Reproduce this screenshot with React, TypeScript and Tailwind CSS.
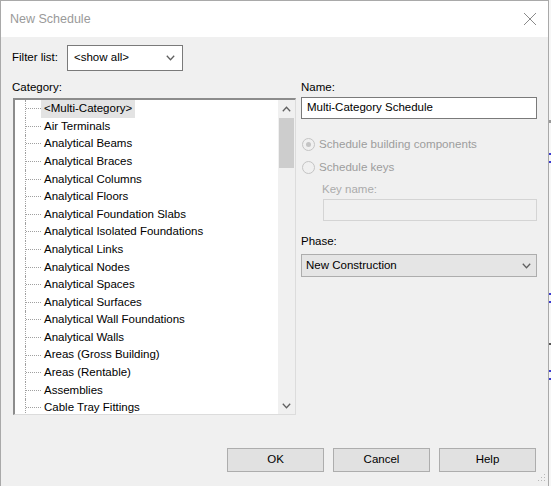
import React from "react";

const items = [
  "<Multi-Category>",
  "Air Terminals",
  "Analytical Beams",
  "Analytical Braces",
  "Analytical Columns",
  "Analytical Floors",
  "Analytical Foundation Slabs",
  "Analytical Isolated Foundations",
  "Analytical Links",
  "Analytical Nodes",
  "Analytical Spaces",
  "Analytical Surfaces",
  "Analytical Wall Foundations",
  "Analytical Walls",
  "Areas (Gross Building)",
  "Areas (Rentable)",
  "Assemblies",
  "Cable Tray Fittings",
];

function Chevron({ up = false, color = "#606060" }: { up?: boolean; color?: string }) {
  return (
    <svg width="9" height="6" viewBox="0 0 9 6">
      <path
        d={up ? "M0.8 5.2 L4.5 1.3 L8.2 5.2" : "M0.8 0.8 L4.5 4.7 L8.2 0.8"}
        fill="none"
        stroke={color}
        strokeWidth="1.3"
      />
    </svg>
  );
}

export default function App() {
  return (
    <div
      className="w-[551px] h-[486px] flex bg-white overflow-hidden text-[11.5px] text-black"
      style={{ fontFamily: '"Liberation Sans", Arial, sans-serif' }}
    >
      <div className="w-[549px] h-[486px] flex flex-col border-l border-t border-r border-[#a9a9a9] bg-[#f0f0f0]">
        {/* title bar */}
        <div className="h-[36px] flex-none bg-white flex items-center justify-between pl-[9px] pr-[10px]">
          <span className="text-[12.5px] text-[#9a9a9a]">New Schedule</span>
          <svg width="14" height="14" viewBox="0 0 14 14" className="mr-[1px]">
            <path d="M1 1 L13 13 M13 1 L1 13" stroke="#8a8a8a" strokeWidth="1" fill="none" />
          </svg>
        </div>

        {/* body */}
        <div className="flex-1 flex flex-col pl-[11px] pt-[8px] relative">
          {/* filter row */}
          <div className="flex items-center h-[26px]">
            <span>Filter list:</span>
            <div className="ml-[9px] w-[116px] h-[26px] bg-white border border-[#7a7a7a] flex items-center justify-between pl-[6px] pr-[7px]">
              <span>&lt;show all&gt;</span>
              <Chevron />
            </div>
          </div>

          {/* main */}
          <div className="flex mt-[8px] gap-[5px]">
            {/* left column */}
            <div className="w-[284px] flex flex-col">
              <div className="h-[16px] leading-[16px]">Category:</div>
              <div className="ml-[1px] mt-[3px] w-[283px] h-[317px] bg-white border-t-2 border-l-2 border-r border-b border-t-[#8c8c8c] border-l-[#8c8c8c] border-r-[#dcdcdc] border-b-[#dcdcdc] flex">
                <div className="flex-1 flex flex-col overflow-hidden">
                  {items.map((it, i) => (
                    <div key={it} className="h-[17.6px] flex-none flex items-stretch">
                      <span className="w-[10px] flex-none" />
                      <span className="w-[16px] flex-none border-l border-dotted border-[#a0a0a0] flex items-center">
                        <span className="w-full border-t border-dotted border-[#a0a0a0]" />
                      </span>
                      <span
                        className={
                          "flex items-center px-[3px] whitespace-nowrap " +
                          (i === 0 ? "bg-[#e3e3e3]" : "")
                        }
                      >
                        {it}
                      </span>
                    </div>
                  ))}
                </div>
                <div className="w-[17px] flex-none bg-[#f0f0f0] flex flex-col">
                  <div className="h-[17px] flex items-center justify-center">
                    <Chevron up />
                  </div>
                  <div className="mt-[1px] mx-[1px] h-[50px] bg-[#cdcdcd]" />
                  <div className="flex-1" />
                  <div className="h-[17px] flex items-center justify-center">
                    <Chevron />
                  </div>
                </div>
              </div>
            </div>

            {/* right column */}
            <div className="w-[236px] flex flex-col">
              <div className="h-[16px] leading-[16px]">Name:</div>
              <div className="mt-[2px] h-[22px] bg-white border border-[#7a7a7a] flex items-center pl-[5px]">
                Multi-Category Schedule
              </div>

              <div className="mt-[16px] h-[18px] flex items-center text-[#9d9d9d] text-[11.6px]">
                <span className="ml-[1px] w-[13px] h-[13px] rounded-full border border-[#c4c4c4] bg-[#f0f0f0] flex items-center justify-center">
                  <span className="w-[5px] h-[5px] rounded-full bg-[#c4c4c4]" />
                </span>
                <span className="ml-[4px]">Schedule building components</span>
              </div>
              <div className="mt-[5px] h-[18px] flex items-center text-[#9d9d9d] text-[11.6px]">
                <span className="ml-[1px] w-[13px] h-[13px] rounded-full border border-[#c4c4c4] bg-[#f0f0f0]" />
                <span className="ml-[4px]">Schedule keys</span>
              </div>
              <div className="mt-[5px] h-[16px] leading-[16px] pl-[21px] text-[#ababab]">Key name:</div>
              <div className="mt-[2px] ml-[22px] h-[22px] border border-[#d4d4d4] bg-[#f0f0f0]" />

              <div className="mt-[12px] h-[16px] leading-[16px]">Phase:</div>
              <div className="mt-[5px] h-[23px] bg-[#e5e5e5] border border-[#adadad] flex items-center justify-between pl-[4px] pr-[5px]">
                <span>New Construction</span>
                <Chevron />
              </div>
            </div>
          </div>

          {/* buttons */}
          <div className="flex mt-[33px] pl-[215px] gap-[9px]">
            {["OK", "Cancel", "Help"].map((b) => (
              <div
                key={b}
                className="w-[97px] h-[24px] bg-[#e1e1e1] border border-[#adadad] flex items-center justify-center"
              >
                {b}
              </div>
            ))}
          </div>

          {/* resize grip */}
          <svg width="8" height="8" viewBox="0 0 8 8" className="absolute right-[2px] bottom-[4px]">
            <rect x="6" y="0" width="1" height="1" fill="#b8b8b8" />
            <rect x="3" y="3" width="1" height="1" fill="#b8b8b8" />
            <rect x="6" y="3" width="1" height="1" fill="#b8b8b8" />
            <rect x="0" y="6" width="1" height="1" fill="#b8b8b8" />
            <rect x="3" y="6" width="1" height="1" fill="#b8b8b8" />
            <rect x="6" y="6" width="1" height="1" fill="#b8b8b8" />
          </svg>
        </div>
      </div>

      {/* background strip */}
      <div className="w-[2px] h-[486px] flex flex-col bg-[#f7f7f7]">
        <div className="h-[120px]" />
        <div className="h-[3px] bg-[#9a9a9a]" />
        <div className="h-[30px]" />
        <div className="h-[2px] bg-[#3a3ad0]" />
        <div className="h-[6px]" />
        <div className="h-[2px] bg-[#3a3ad0]" />
        <div className="h-[130px]" />
        <div className="h-[2px] bg-[#3a3ad0]" />
        <div className="h-[6px]" />
        <div className="h-[2px] bg-[#3a3ad0]" />
        <div className="h-[40px]" />
        <div className="h-[2px] bg-[#555]" />
        <div className="h-[25px]" />
        <div className="h-[2px] bg-[#3a3ad0]" />
        <div className="h-[6px]" />
        <div className="h-[2px] bg-[#3a3ad0]" />
      </div>
    </div>
  );
}
